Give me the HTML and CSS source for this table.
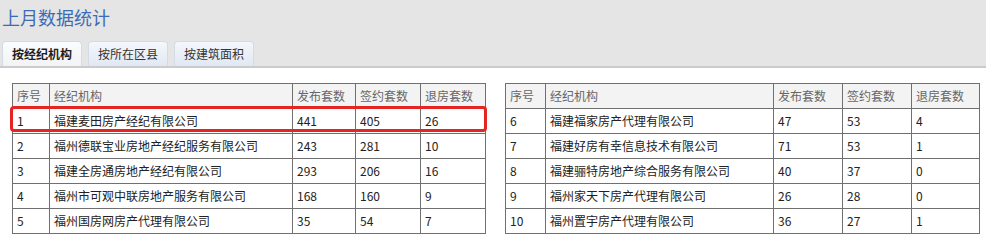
FILE: index.html
```html
<!DOCTYPE html>
<html lang="zh-CN">
<head>
<meta charset="utf-8">
<title>上月数据统计</title>
<link rel="stylesheet" href="styles.css">
</head>
<body>
<div class="head">
  <h1 class="title">上月数据统计</h1>
  <div class="tabs">
    <div class="tab active">按经纪机构</div>
    <div class="tab">按所在区县</div>
    <div class="tab">按建筑面积</div>
  </div>
</div>
<div class="tables">
  <div class="tbl-wrap">
    <table class="grid left">
      <colgroup><col class="l1"><col class="l2"><col class="l3"><col class="l4"><col class="l5"></colgroup>
      <thead><tr><th>序号</th><th>经纪机构</th><th>发布套数</th><th>签约套数</th><th>退房套数</th></tr></thead>
      <tbody>
        <tr><td>1</td><td>福建麦田房产经纪有限公司</td><td>441</td><td>405</td><td>26</td></tr>
        <tr><td>2</td><td>福州德联宝业房地产经纪服务有限公司</td><td>243</td><td>281</td><td>10</td></tr>
        <tr><td>3</td><td>福建全房通房地产经纪有限公司</td><td>293</td><td>206</td><td>16</td></tr>
        <tr><td>4</td><td>福州市可观中联房地产服务有限公司</td><td>168</td><td>160</td><td>9</td></tr>
        <tr><td>5</td><td>福州国房网房产代理有限公司</td><td>35</td><td>54</td><td>7</td></tr>
      </tbody>
    </table>
    <div class="highlight"></div>
  </div>
  <div class="tbl-wrap">
    <table class="grid right">
      <colgroup><col class="r1"><col class="r2"><col class="r3"><col class="r4"><col class="r5"></colgroup>
      <thead><tr><th>序号</th><th>经纪机构</th><th>发布套数</th><th>签约套数</th><th>退房套数</th></tr></thead>
      <tbody>
        <tr><td>6</td><td>福建福家房产代理有限公司</td><td>47</td><td>53</td><td>4</td></tr>
        <tr><td>7</td><td>福建好房有幸信息技术有限公司</td><td>71</td><td>53</td><td>1</td></tr>
        <tr><td>8</td><td>福建骊特房地产综合服务有限公司</td><td>40</td><td>37</td><td>0</td></tr>
        <tr><td>9</td><td>福州家天下房产代理有限公司</td><td>26</td><td>28</td><td>0</td></tr>
        <tr><td>10</td><td>福州置宇房产代理有限公司</td><td>36</td><td>27</td><td>1</td></tr>
      </tbody>
    </table>
  </div>
</div>
</body>
</html>
```

FILE: styles.css
```css
* { box-sizing: border-box; }
html, body {
  margin: 0;
  padding: 0;
  background: #ffffff;
  font-family: "Noto Sans CJK SC", "Noto Sans", sans-serif;
  color: #222;
}
.head {
  background: #e5e5e5;
  border-bottom: 2px solid #cbcbcb;
  padding: 5px 0 0 2px;
}
.title {
  margin: 0 0 12px 0;
  font-size: 18px;
  line-height: 24px;
  font-weight: normal;
  color: #3d6cb5;
}
.tabs {
  display: flex;
  gap: 6px;
}
.tab {
  height: 25px;
  line-height: 24px;
  padding: 0 9px 0 9px;
  font-size: 12px;
  color: #333;
  border: 1px solid #d3dbe6;
  border-bottom: none;
  border-radius: 4px 4px 0 0;
  background: linear-gradient(#f4f7fb, #e1e8f3);
}
.tab.active {
  font-weight: bold;
  color: #1e1e1e;
  background: linear-gradient(#fbfcfd, #f1f3f6);
}
.tables {
  display: flex;
  gap: 19px;
  padding: 15px 0 0 12px;
}
.tbl-wrap {
  position: relative;
}
.grid {
  border-collapse: collapse;
  table-layout: fixed;
  font-size: 12px;
}
.grid.left { width: 474px; }
.grid.right { width: 475px; }
.l1 { width: 37px; } .l2 { width: 243px; } .l3 { width: 63px; } .l4 { width: 65px; } .l5 { width: 65px; }
.r1 { width: 40px; } .r2 { width: 228px; } .r3 { width: 69px; } .r4 { width: 69px; } .r5 { width: 68px; }
.grid th, .grid td {
  border: 1px solid #707070;
  height: 25px;
  padding: 0 4px;
  text-align: left;
  white-space: nowrap;
  overflow: hidden;
  line-height: 16px;
}
.grid th {
  background: #f3f3f3;
  font-weight: normal;
  color: #666;
}
.grid td {
  background: #fff;
  color: #222;
}
.highlight {
  position: absolute;
  left: -2px;
  top: 23px;
  width: 477px;
  height: 26px;
  border: 3px solid #e52521;
  border-radius: 4px;
  pointer-events: none;
}
```
